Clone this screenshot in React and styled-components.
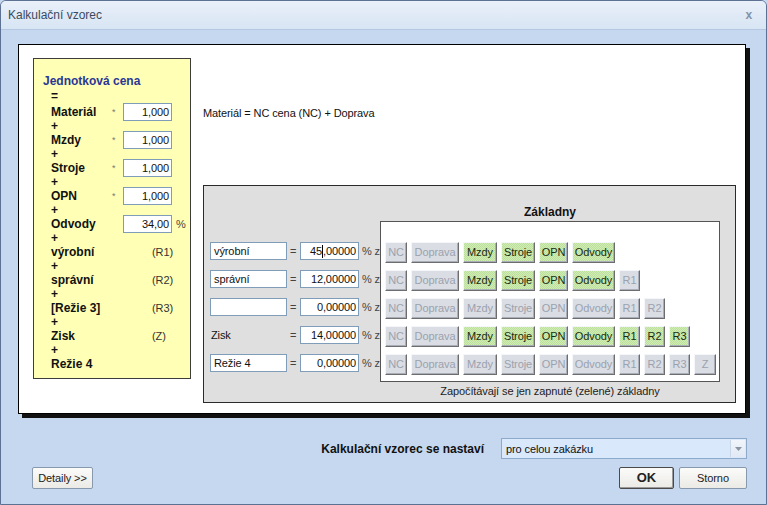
import React from 'react';
import styled, { createGlobalStyle, css } from 'styled-components';

const FONT = `"Liberation Sans", Arial, sans-serif`;

const GlobalStyle = createGlobalStyle`
  html, body {
    margin: 0;
    padding: 0;
    background: #c5d8ef;
  }
  * { box-sizing: border-box; }
`;

const Window = styled.div`
  width: 767px;
  height: 505px;
  display: flex;
  flex-direction: column;
  background: #c5d8ef;
  border: 1px solid #5d7193;
  border-radius: 6px 6px 0 0;
  font-family: ${FONT};
  font-size: 11px;
  letter-spacing: -0.1px;
  color: #111;
  overflow: hidden;
  white-space: nowrap;
`;

const TitleBar = styled.div`
  height: 29px;
  flex: 0 0 29px;
  display: flex;
  align-items: center;
  justify-content: space-between;
  padding: 0 14px 0 7px;
  background: linear-gradient(#e9f0f9, #d8e5f4);
  border-bottom: 1px solid #b4c8e2;
`;

const Title = styled.div`
  font-size: 12px;
  letter-spacing: 0;
  color: #3b4a60;
`;

const Close = styled.div`
  font-size: 12px;
  font-weight: bold;
  color: #8393a8;
`;

const Content = styled.div`
  padding: 14px 19px 0 17px;
`;

const MainPanel = styled.div`
  width: 728px;
  height: 370px;
  display: flex;
  gap: 12px;
  padding: 13px 0 0 14px;
  background: #fff;
  border: 1px solid #000;
  box-shadow: 4px 4px 0 #111;
`;

const Yellow = styled.div`
  width: 158px;
  height: 321px;
  padding: 14px 0 0 9px;
  background: #ffffb5;
  border: 1px solid #3c3c3c;
`;

const YTitle = styled.div`
  height: 16px;
  line-height: 16px;
  font-size: 12px;
  letter-spacing: 0;
  font-weight: bold;
  color: #2a3796;
`;

const YLine = styled.div`
  height: ${p => (p.first ? 16 : 14)}px;
  line-height: 14px;
  padding-left: 8px;
  font-size: 12px;
  font-weight: bold;
`;

const YRow = styled.div`
  height: 14px;
  display: flex;
  align-items: center;
  padding-left: 8px;
`;

const YLabel = styled.div`
  width: 61px;
  font-size: 12px;
  letter-spacing: 0;
  font-weight: bold;
`;

const Star = styled.div`
  width: 11px;
  font-size: 9px;
  color: #777;
`;

const Ref = styled.div`
  margin-left: 40px;
  color: #333;
`;

const NumInput = styled.div`
  width: ${p => p.w}px;
  height: 18px;
  line-height: 16px;
  padding: 0 2px;
  text-align: right;
  background: #fff;
  border: 1px solid #7f9db9;
  color: #111;
`;

const Unit = styled.div`
  margin-left: 4px;
  color: #444;
`;

const RightCol = styled.div`
  display: flex;
  flex-direction: column;
`;

const Formula = styled.div`
  margin-top: 47px;
  height: 16px;
  line-height: 16px;
`;

const GrayPanel = styled.div`
  margin-top: 64px;
  width: 533px;
  height: 218px;
  display: flex;
  padding-left: 6px;
  background: #dfdfdf;
  border: 1px solid #2a2a2a;
`;

const RowsCol = styled.div`
  width: 170px;
  padding-top: 55px;
  display: flex;
  flex-direction: column;
  gap: 8px;
`;

const LeftRow = styled.div`
  height: 20px;
  display: flex;
  align-items: center;
`;

const TextInput = styled.div`
  width: 77px;
  height: 18px;
  line-height: 16px;
  padding: 0 3px;
  background: #fff;
  border: 1px solid #7f9db9;
`;

const PlainName = styled.div`
  width: 77px;
  padding-left: 1px;
`;

const EqSmall = styled.div`
  width: 10px;
  margin-left: 3px;
  color: #444;
`;

const Percent = styled.div`
  margin-left: 3px;
  color: #444;
`;

const Caret = styled.span`
  display: inline-block;
  width: 1px;
  height: 13px;
  vertical-align: -3px;
  background: #000;
`;

const BasesCol = styled.div`
  width: 340px;
  display: flex;
  flex-direction: column;
`;

const BasesTitle = styled.div`
  height: 35px;
  padding-top: 19px;
  line-height: 15px;
  text-align: center;
  font-size: 12px;
  letter-spacing: 0;
  font-weight: bold;
`;

const BasesBox = styled.div`
  height: 161px;
  padding: 20px 0 0 4px;
  display: flex;
  flex-direction: column;
  gap: 8px;
  background: #fff;
  border: 1px solid #555;
`;

const BtnRow = styled.div`
  height: 20px;
  display: flex;
  gap: 4px;
`;

const BaseBtn = styled.div`
  width: ${p => p.w}px;
  height: 21px;
  line-height: 18px;
  text-align: center;
  border: 1px solid;
  border-color: #f4f6fa #6d6d6d #6d6d6d #f4f6fa;
  box-shadow: inset -1px -1px 0 #a9aeb8;
  ${p => p.on ? css`
    color: #1a2a10;
    background-color: #c4e5a5;
    background-image: conic-gradient(#bcdf9b 25%, #d0edb6 0 50%, #bcdf9b 0 75%, #d0edb6 0);
    background-size: 2px 2px;
  ` : css`
    color: #9ba2ae;
    background: #dadde4;
  `}
`;

const Caption = styled.div`
  margin-top: 1px;
  line-height: 16px;
  text-align: center;
  color: #222;
`;

const Footer = styled.div`
  padding: 24px 19px 0 31px;
  display: flex;
  flex-direction: column;
`;

const SelectRow = styled.div`
  display: flex;
  justify-content: flex-end;
  align-items: center;
  gap: 17px;
`;

const SelectLabel = styled.div`
  font-weight: bold;
  font-size: 12px;
  letter-spacing: 0;
`;

const Select = styled.div`
  width: 246px;
  height: 21px;
  display: flex;
  align-items: center;
  justify-content: space-between;
  padding: 0 1px 0 4px;
  background: #d9e8fb;
  border: 1px solid #8eaacb;
`;

const Arrow = styled.div`
  width: 15px;
  height: 17px;
  display: flex;
  align-items: center;
  justify-content: center;
  background: linear-gradient(#f1f5fb, #e1e9f4);
  border-left: 1px solid #c9d6e8;
`;

const ButtonRow = styled.div`
  margin-top: 8px;
  display: flex;
  justify-content: space-between;
`;

const ButtonGroup = styled.div`
  display: flex;
  gap: 5px;
`;

const Button = styled.div`
  width: ${p => p.w}px;
  height: 22px;
  line-height: 20px;
  text-align: center;
  background: linear-gradient(#fbfbfa, #ebeae5);
  border: 1px solid #8899ae;
  border-radius: 2px;
  color: #222;
  ${p => p.primary && css`
    font-weight: bold;
    font-size: 13px;
    border: 1px solid #4a4a4a;
    box-shadow: inset -1px -1px 0 #9a9a9a;
  `}
`;

const yRows = [
  { label: 'Materiál', star: true, value: '1,000' },
  { label: 'Mzdy', star: true, value: '1,000' },
  { label: 'Stroje', star: true, value: '1,000' },
  { label: 'OPN', star: true, value: '1,000' },
  { label: 'Odvody', value: '34,00', unit: '%' },
  { label: 'výrobní', ref: '(R1)' },
  { label: 'správní', ref: '(R2)' },
  { label: '[Režie 3]', ref: '(R3)' },
  { label: 'Zisk', ref: '(Z)' },
  { label: 'Režie 4' },
];

const BTNS = [
  ['NC', 22], ['Doprava', 48], ['Mzdy', 34], ['Stroje', 34], ['OPN', 29],
  ['Odvody', 43], ['R1', 21], ['R2', 21], ['R3', 21], ['Z', 22],
];

const surcharge = [
  { name: 'výrobní', value: '45,00000', caret: true, count: 6, on: [2, 3, 4, 5] },
  { name: 'správní', value: '12,00000', count: 7, on: [2, 3, 4, 5] },
  { name: '', value: '0,00000', count: 8, on: [] },
  { name: 'Zisk', plain: true, value: '14,00000', count: 9, on: [2, 3, 4, 5, 6, 7, 8] },
  { name: 'Režie 4', value: '0,00000', count: 10, on: [] },
];

export default function App() {
  return (
    <>
      <GlobalStyle />
      <Window>
        <TitleBar>
          <Title>Kalkulační vzorec</Title>
          <Close>x</Close>
        </TitleBar>
        <Content>
          <MainPanel>
            <Yellow>
              <YTitle>Jednotková cena</YTitle>
              <YLine first>=</YLine>
              {yRows.map((r, i) => (
                <React.Fragment key={r.label}>
                  <YRow>
                    <YLabel>{r.label}</YLabel>
                    {r.value && <Star>{r.star ? '*' : ''}</Star>}
                    {r.value && <NumInput w={49}>{r.value}</NumInput>}
                    {r.unit && <Unit>{r.unit}</Unit>}
                    {r.ref && <Ref>{r.ref}</Ref>}
                  </YRow>
                  {i < yRows.length - 1 && <YLine>+</YLine>}
                </React.Fragment>
              ))}
            </Yellow>
            <RightCol>
              <Formula>Materiál = NC cena (NC) + Doprava</Formula>
              <GrayPanel>
                <RowsCol>
                  {surcharge.map((s, i) => (
                    <LeftRow key={i}>
                      {s.plain ? <PlainName>{s.name}</PlainName> : <TextInput>{s.name}</TextInput>}
                      <EqSmall>=</EqSmall>
                      <NumInput w={59}>
                        {s.caret ? <>45<Caret />,00000</> : s.value}
                      </NumInput>
                      <Percent>% z</Percent>
                    </LeftRow>
                  ))}
                </RowsCol>
                <BasesCol>
                  <BasesTitle>Základny</BasesTitle>
                  <BasesBox>
                    {surcharge.map((s, i) => (
                      <BtnRow key={i}>
                        {BTNS.slice(0, s.count).map(([t, w], j) => (
                          <BaseBtn key={t} w={w} on={s.on.includes(j) ? 1 : 0}>{t}</BaseBtn>
                        ))}
                      </BtnRow>
                    ))}
                  </BasesBox>
                  <Caption>Započítávají se jen zapnuté (zelené) základny</Caption>
                </BasesCol>
              </GrayPanel>
            </RightCol>
          </MainPanel>
        </Content>
        <Footer>
          <SelectRow>
            <SelectLabel>Kalkulační vzorec se nastaví</SelectLabel>
            <Select>
              <span>pro celou zakázku</span>
              <Arrow>
                <svg width="7" height="4" viewBox="0 0 7 4"><path d="M0 0h7L3.5 4z" fill="#8a94a3" /></svg>
              </Arrow>
            </Select>
          </SelectRow>
          <ButtonRow>
            <Button w={61}>Detaily &gt;&gt;</Button>
            <ButtonGroup>
              <Button w={55} primary>OK</Button>
              <Button w={68}>Storno</Button>
            </ButtonGroup>
          </ButtonRow>
        </Footer>
      </Window>
    </>
  );
}
